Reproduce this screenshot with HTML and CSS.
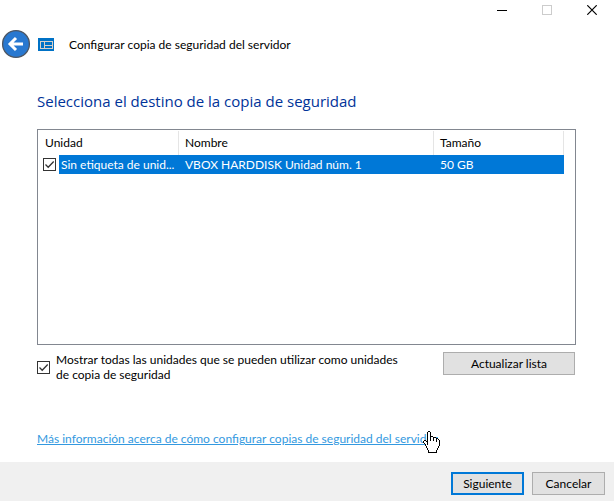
FILE: index.html
```html
<!DOCTYPE html>
<html lang="es">
<head>
<meta charset="utf-8">
<meta name="viewport" content="width=device-width, initial-scale=1">
<title>Configurar copia de seguridad del servidor</title>
<link rel="stylesheet" href="styles.css">
</head>
<body>
<div class="window">
  <div class="titlebar">
    <button class="caption" type="button" aria-label="Minimizar"><svg width="10" height="10" viewBox="0 0 10 10" shape-rendering="crispEdges"><path d="M0 5h10v1H0z" fill="#000"/></svg></button>
    <button class="caption" type="button" aria-label="Maximizar" disabled><svg width="10" height="10" viewBox="0 0 10 10" shape-rendering="crispEdges"><path d="M.5.5h9v9h-9z" fill="none" stroke="#ccc"/></svg></button>
    <button class="caption" type="button" aria-label="Cerrar"><svg width="10" height="10" viewBox="0 0 10 10"><path d="M.3.3l9.4 9.4M9.7.3L.3 9.7" stroke="#000" stroke-width="1.2"/></svg></button>
  </div>
  <header class="header">
    <button class="back" type="button" aria-label="Atrás"><svg width="30" height="30" viewBox="0 0 30 30"><circle cx="15" cy="15" r="13.4" fill="#2878d0" stroke="#4d5663" stroke-width="1.3"/><path d="M9 15h13M15 9l-6 6 6 6" fill="none" stroke="#fff" stroke-width="3"/></svg></button>
    <svg class="app-icon" width="16" height="13" viewBox="0 0 16 13" shape-rendering="crispEdges"><path d="M0 0h16v13H0z" fill="#0072c6"/><path d="M2 3h13v1H2zM2 10h13v1H2zM2 4h1v6H2zM6 4h1v6H6zM14 4h1v6h-1zM7 7h7v1H7z" fill="#d8cfc8"/></svg>
    <span class="title">Configurar copia de seguridad del servidor</span>
  </header>
  <main class="content">
    <h1>Selecciona el destino de la copia de seguridad</h1>
    <div class="list">
      <table>
        <colgroup><col class="col-unit"><col class="col-name"><col class="col-size"></colgroup>
        <thead><tr><th>Unidad</th><th>Nombre</th><th>Tamaño</th></tr></thead>
        <tbody><tr>
          <td class="unit"><div class="unit-cell"><input class="check" type="checkbox" id="drive" checked><label for="drive">Sin etiqueta de unid...</label></div></td>
          <td>VBOX HARDDISK Unidad núm. 1</td>
          <td>50 GB</td>
        </tr></tbody>
      </table>
    </div>
    <div class="options">
      <div class="show-all">
        <input class="check" type="checkbox" id="show-all" checked>
        <label for="show-all">Mostrar todas las unidades que se pueden utilizar como unidades de copia de seguridad</label>
      </div>
      <button class="btn btn-wide" type="button">Actualizar lista</button>
    </div>
    <p class="more"><a href="#">Más información acerca de cómo configurar copias de seguridad del servidor</a>
      <svg class="pointer" width="17" height="22" viewBox="0 0 17 22" shape-rendering="crispEdges"><path d="M5 1h2v5h3v1h3v1h2v1h1v6h-1v2h-1v2h-1v2H6v-2H5v-2H4v-2H3v-2H2v-1H1v-2h2v1h2z" fill="#fff"/><path d="M5 0h2v1H5zM4 1h1v13H4zM7 1h1v9H7zM8 5h2v1H8zM10 6h1v4h-1zM11 6h2v1h-2zM13 7h1v4h-1zM14 7h1v1h-1zM15 8h1v1h-1zM16 9h1v6h-1zM15 15h1v2h-1zM14 17h1v2h-1zM13 19h1v2h-1zM5 21h9v1H5zM5 19h1v2H5zM4 17h1v2H4zM3 15h1v2H3zM2 13h1v2H2zM1 12h1v1H1zM0 10h1v2H0zM1 9h2v1H1zM3 10h1v1H3z" fill="#000"/></svg>
    </p>
  </main>
  <footer class="footer">
    <button class="btn btn-default" type="button">Siguiente</button>
    <button class="btn" type="button">Cancelar</button>
  </footer>
</div>
</body>
</html>
```

FILE: styles.css
```css
* { box-sizing: border-box; }

body {
  margin: 0;
  background: #fff;
  color: #000;
  font: 12px/15px "Segoe UI", Lato, "Open Sans", sans-serif;
}

button { font: inherit; color: inherit; padding: 0; }

.window {
  display: flex;
  flex-direction: column;
  min-height: 100vh;
}

.titlebar {
  display: flex;
  justify-content: flex-end;
}

.caption {
  display: grid;
  place-items: center;
  width: 45px;
  height: 20px;
  border: 0;
  background: none;
}

.header {
  display: flex;
  align-items: center;
  padding: 9px 1px 0;
}

.back {
  display: flex;
  border: 0;
  background: none;
}

.app-icon { margin: 0 15px 0 7px; }

.content {
  flex: 1;
  padding: 31px 38px 15px 37px;
}

h1 {
  margin: 0 0 17px;
  color: #039;
  font-family: "Segoe UI", "Open Sans", sans-serif;
  font-size: 15px;
  line-height: 22px;
  font-weight: 400;
}

.list {
  min-height: 216px;
  padding: 1px 11px 0 1px;
  border: 1px solid #828790;
}

table {
  width: 100%;
  table-layout: fixed;
  border-collapse: separate;
  border-spacing: 0;
}

.col-unit { width: 140px; }
.col-name { width: 255px; }

th {
  height: 24px;
  padding: 0 6px 2px;
  border-right: 1px solid #e5e5e5;
  font-weight: 400;
  text-align: left;
}

td {
  height: 19px;
  padding: 0 6px;
  background: #0078d7;
  color: #fff;
}

.unit { padding: 0 0 0 4px; background: #fff; }

.unit-cell { display: flex; align-items: center; gap: 3px; }

.unit-cell label {
  flex: 1;
  padding-left: 2px;
  background: #0078d7;
  line-height: 19px;
  white-space: nowrap;
}

.check {
  appearance: none;
  flex: none;
  width: 13px;
  height: 13px;
  margin: 0;
  border: 1px solid #333;
  background: #fff url("data:image/svg+xml,%3Csvg xmlns='http://www.w3.org/2000/svg' viewBox='0 0 11 11'%3E%3Cpath d='M1.500 5.500l2.700 2.700L9.700 2.500' fill='none' stroke='%23333' stroke-width='1.300'/%3E%3C/svg%3E") center / 11px 11px;
}

.options {
  display: flex;
  align-items: flex-start;
  justify-content: space-between;
  padding: 7px 1px 0 0;
}

.show-all {
  display: flex;
  align-items: center;
  gap: 6px;
}

.show-all label { max-width: 348px; }

.btn {
  width: 73px;
  height: 23px;
  border: 1px solid #adadad;
  background: #e1e1e1;
}

.btn-wide { width: 132px; }

.btn-default { border: 2px solid #0078d7; }

.more {
  position: relative;
  width: fit-content;
  margin: 49px 0 0;
}

.more a { color: #3399e0; }

.pointer {
  position: absolute;
  left: 386px;
  top: 0;
}

.footer {
  display: flex;
  justify-content: flex-end;
  gap: 8px;
  padding: 10px 9px 6px;
  background: #f0f0f0;
}
```
